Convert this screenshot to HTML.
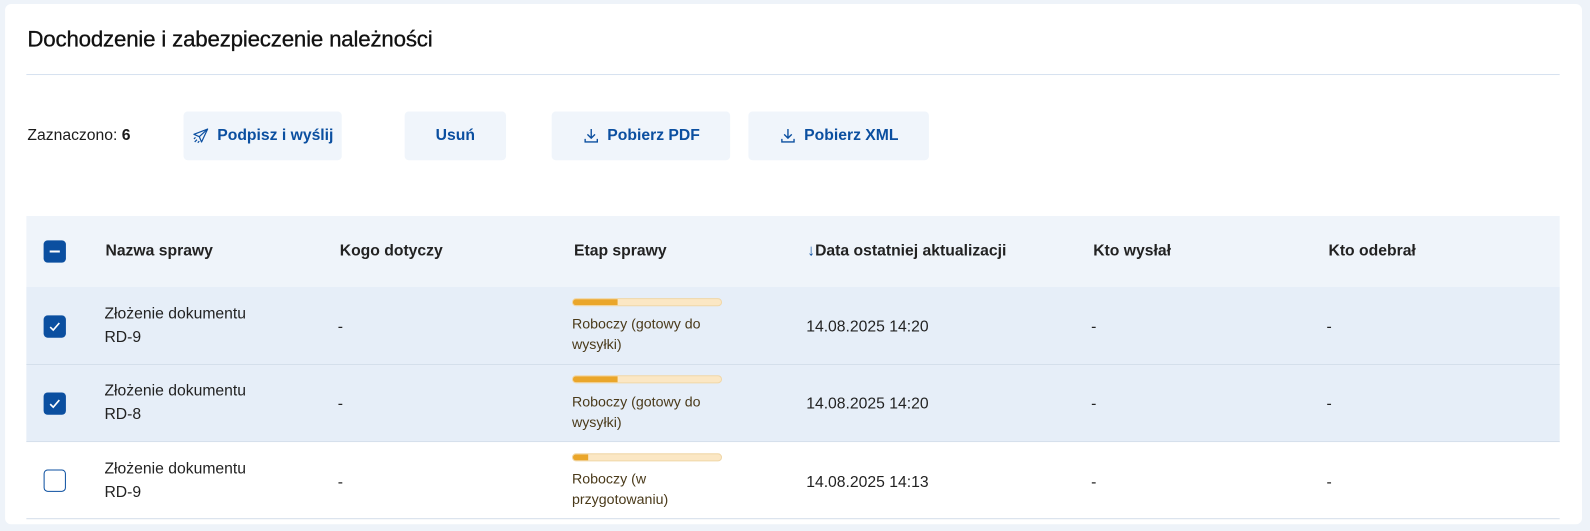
<!DOCTYPE html>
<html><head><meta charset="utf-8"><style>
*{box-sizing:border-box;margin:0;padding:0}
body{width:1590px;height:531px;background:#eef3f9;font-family:"Liberation Sans",sans-serif;color:#1b1b1b;position:relative;overflow:hidden}
#w{position:absolute;left:0;top:0;width:1568px;height:524px;transform:scale(1.0141);transform-origin:0 0}
.card{position:absolute;left:5px;top:4px;width:1555px;height:513px;background:#fff;border-radius:6px}
.abs{position:absolute}
h1{position:absolute;left:27px;top:26px;font-size:22px;font-weight:normal;color:#111;letter-spacing:-0.2px;-webkit-text-stroke:0.3px #111}
.hr{left:26px;top:73px;width:1512px;height:1px;background:#d6e2f0}
.btn{position:absolute;top:110px;height:48px;background:#f0f5fb;border-radius:4px;color:#0b4fa0;font-weight:bold;font-size:15.5px;display:flex;align-items:center;justify-content:center;gap:7px}
.th{position:absolute;top:239px;font-weight:bold;font-size:15.5px;color:#222}
.row{position:absolute;left:26px;width:1512px;border-bottom:1px solid #d3deea}
.cb{position:absolute;left:43px;width:22px;height:22px;border-radius:4px;background:#0b4fa0;display:flex;align-items:center;justify-content:center}
.cb.off{background:#fff;border:1.5px solid #0b4fa0}
.t{position:absolute;font-size:15.5px;line-height:23px;color:#222}
.st{position:absolute;left:564px;font-size:14px;line-height:20px;color:#4a3a1a}
.bar{position:absolute;left:564px;width:148px;height:8px;border-radius:4px;background:#fbe7c4;border:1px solid #f0d7a8;overflow:hidden}
.bar i{display:block;height:100%;background:#eaa62a}
</style></head><body><div id="w">
<div class="card"></div>
<h1>Dochodzenie i zabezpieczenie należności</h1>
<div class="abs hr"></div>
<div class="abs" style="left:27px;top:125px;font-size:15.5px">Zaznaczono: <b>6</b></div>
<div class="btn" style="left:181px;width:156px"><svg width="18" height="18" viewBox="0 0 24 24" fill="none" stroke="#0b4fa0" stroke-width="1.6" stroke-linejoin="round"><path d="M21 3L3 10l7 3 3 7 8-17z"/><path d="M21 3L10 13"/><path d="M4 20l3-3M3 16l2-2M8 21l2-2"/></svg>Podpisz i wyślij</div>
<div class="btn" style="left:399px;width:100px">Usuń</div>
<div class="btn" style="left:544px;width:176px"><svg width="18" height="18" viewBox="0 0 24 24" fill="none" stroke="#0b4fa0" stroke-width="1.8"><path d="M12 3v12M7 10l5 5 5-5M4 16v4h16v-4"/></svg>Pobierz PDF</div>
<div class="btn" style="left:738px;width:178px"><svg width="18" height="18" viewBox="0 0 24 24" fill="none" stroke="#0b4fa0" stroke-width="1.8"><path d="M12 3v12M7 10l5 5 5-5M4 16v4h16v-4"/></svg>Pobierz XML</div>

<div class="row" style="top:213px;height:70px;background:#eff4fa;border:none"></div>
<div class="cb" style="top:237px"><div style="width:10px;height:2px;background:#fff"></div></div>
<div class="th" style="left:104px">Nazwa sprawy</div>
<div class="th" style="left:335px">Kogo dotyczy</div>
<div class="th" style="left:566px">Etap sprawy</div>
<div class="th" style="left:796px"><span style="color:#0b4fa0">↓</span>Data ostatniej aktualizacji</div>
<div class="th" style="left:1078px">Kto wysłał</div>
<div class="th" style="left:1310px">Kto odebrał</div>

<div class="row" style="top:283px;height:77px;background:#e6eef8"></div>
<div class="row" style="top:360px;height:76px;background:#e6eef8"></div>
<div class="row" style="top:436px;height:76px;background:#fff"></div>

<div class="cb" style="top:311px"><svg width="14" height="14" viewBox="0 0 14 14" fill="none" stroke="#fff" stroke-width="1.6"><path d="M2.5 7.5l3 3 6-7"/></svg></div>
<div class="cb" style="top:387px"><svg width="14" height="14" viewBox="0 0 14 14" fill="none" stroke="#fff" stroke-width="1.6"><path d="M2.5 7.5l3 3 6-7"/></svg></div>
<div class="cb off" style="top:463px"></div>

<div class="t" style="left:103px;top:298px">Złożenie dokumentu<br>RD-9</div>
<div class="t" style="left:103px;top:374px">Złożenie dokumentu<br>RD-8</div>
<div class="t" style="left:103px;top:451px">Złożenie dokumentu<br>RD-9</div>
<div class="t" style="left:333px;top:311px">-</div>
<div class="t" style="left:333px;top:387px">-</div>
<div class="t" style="left:333px;top:464px">-</div>

<div class="bar" style="top:294px"><i style="width:30%"></i></div>
<div class="st" style="top:309px">Roboczy (gotowy do<br>wysyłki)</div>
<div class="bar" style="top:370px"><i style="width:30%"></i></div>
<div class="st" style="top:386px">Roboczy (gotowy do<br>wysyłki)</div>
<div class="bar" style="top:447px"><i style="width:10%"></i></div>
<div class="st" style="top:462px">Roboczy (w<br>przygotowaniu)</div>

<div class="t" style="left:795px;top:311px">14.08.2025 14:20</div>
<div class="t" style="left:795px;top:387px">14.08.2025 14:20</div>
<div class="t" style="left:795px;top:464px">14.08.2025 14:13</div>
<div class="t" style="left:1076px;top:311px">-</div>
<div class="t" style="left:1076px;top:387px">-</div>
<div class="t" style="left:1076px;top:464px">-</div>
<div class="t" style="left:1308px;top:311px">-</div>
<div class="t" style="left:1308px;top:387px">-</div>
<div class="t" style="left:1308px;top:464px">-</div>
</div></body></html>
